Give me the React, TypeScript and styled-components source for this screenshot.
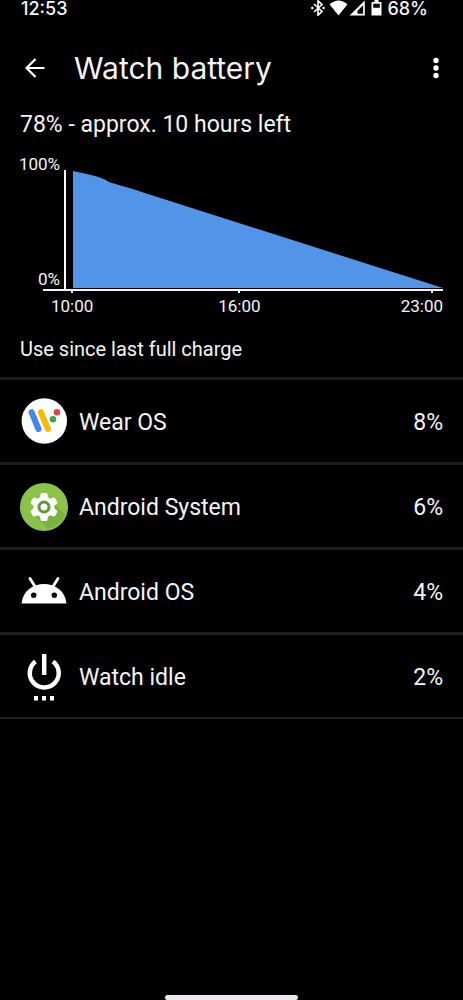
import React from "react";
import styled, { createGlobalStyle } from "styled-components";

const GlobalStyle = createGlobalStyle`
  *, *::before, *::after { box-sizing: border-box; }
  body { margin: 0; background: #000; }
`;

const Screen = styled.div`
  display: flex;
  flex-direction: column;
  min-height: 100vh;
  background: #000;
  color: #f4f4f4;
  font-family: Roboto, sans-serif;
`;

const StatusBar = styled.div`
  display: flex;
  justify-content: space-between;
  align-items: center;
  height: 18px;
  padding: 0 35px 0 21px;
  font-family: Inter, sans-serif;
  font-weight: 500;
  font-size: 18px;
  line-height: 18px;
`;

const StatusIcons = styled.div`
  display: flex;
  align-items: center;
  gap: 4px;

  svg {
    margin-bottom: 2px;
  }
`;

const TopBar = styled.header`
  display: flex;
  align-items: center;
  height: 72px;
  margin-top: 14px;
  padding: 0 12px 0 20px;
`;

const IconButton = styled.button`
  display: flex;
  align-items: center;
  justify-content: center;
  width: 30px;
  height: 40px;
  padding: 0;
  border: 0;
  background: none;
  color: inherit;
`;

const Title = styled.h1`
  flex: 1;
  margin: 0 0 0 24px;
  font-family: Inter, sans-serif;
  font-weight: 400;
  font-size: 30px;
  line-height: 40px;
`;

const Summary = styled.p`
  margin: 6px 20px 0;
  font-size: 23px;
  line-height: 30px;
`;

const Chart = styled.figure`
  display: grid;
  grid-template-columns: 40px 1fr;
  column-gap: 4px;
  margin: 14px 20px 0;
  font-size: 17px;
  line-height: 20px;
`;

const LevelLabels = styled.div`
  display: flex;
  flex-direction: column;
  justify-content: space-between;
  align-items: flex-end;
`;

const Plot = styled.div`
  height: 119px;
  margin-top: 16px;
  padding: 0 0 1px 7px;
  border-left: 2px solid #fff;
`;

const Area = styled.svg`
  display: block;
  width: 100%;
  height: 100%;
`;

const Axis = styled.svg`
  display: block;
  grid-column: 1 / -1;
  justify-self: end;
  width: calc(100% - 23px);
  height: 4px;
`;

const HourLabels = styled.div`
  grid-column: 1 / -1;
  display: grid;
  grid-template-columns: 11fr 12fr auto;
  margin: 3px 0 0 31px;
`;

const SectionTitle = styled.h2`
  margin: 21px 20px 0;
  font-weight: 400;
  font-size: 20px;
  line-height: 24px;
`;

const UsageList = styled.ul`
  margin: 16px 0 0;
  padding: 0;
  list-style: none;
  border-bottom: 2px solid #1c1c1c;
`;

const UsageRow = styled.li`
  display: flex;
  align-items: center;
  height: 85px;
  padding: 2px 20px 0;
  border-top: 3px solid #1c1c1c;
  font-size: 23px;
  line-height: 29px;
`;

const AppIcon = styled.svg`
  flex: none;
  width: 48px;
  height: 48px;
  margin-right: 11px;
`;

const AppName = styled.span`
  flex: 1;
`;

const HomeHandle = styled.div`
  width: 133px;
  height: 5px;
  margin: auto auto 0;
  border-radius: 3px;
  background: #eee8ec;
`;

const WearIcon = () => (
  <AppIcon viewBox="0 0 48 48" aria-hidden="true">
    <circle cx="24.300" cy="23" r="22.700" fill="#fff" />
    <g strokeWidth="6" strokeLinecap="round">
      <path d="M11.600 14.200 18.500 31" stroke="#4285f4" />
      <path d="M20.800 14.200 28 31" stroke="#f9bb06" />
    </g>
    <circle cx="33" cy="21.300" r="3.300" fill="#34a853" />
    <circle cx="37" cy="14.300" r="3.200" fill="#e0443a" />
  </AppIcon>
);

const SystemIcon = () => (
  <AppIcon viewBox="0 0 48 48" aria-hidden="true">
    <circle cx="24" cy="24" r="24" fill="#8bc34a" />
    <path d="M16 34 28 46q12-3 17-14L34 20Z" fill="#7bb342" />
    <g fill="#fff">
      <circle cx="24" cy="24" r="10.500" />
      {[0, 60, 120, 180, 240, 300].map((angle) => (
        <path
          key={angle}
          d="M20.600 11q.2-1 1.200-1h4.400q1 0 1.200 1l1 6h-8.800Z"
          transform={`rotate(${angle} 24 24)`}
        />
      ))}
    </g>
    <circle cx="24" cy="24" r="5" fill="#fff" stroke="#5e9a38" strokeWidth="3" />
  </AppIcon>
);

const RobotIcon = () => (
  <AppIcon viewBox="0 0 48 48" aria-hidden="true">
    <path d="M1.500 35.500C4 9.500 44 9.500 46.500 35.500Z" fill="#fff" />
    <path d="m10 10.500 5 8M38 10.500l-5 8" stroke="#fff" strokeWidth="2.800" strokeLinecap="round" />
    <circle cx="13.700" cy="27.200" r="2.700" />
    <circle cx="34.300" cy="27.200" r="2.700" />
  </AppIcon>
);

const IdleIcon = () => (
  <AppIcon viewBox="0 0 48 48" aria-hidden="true">
    <path
      d="M15.500 8.500A14.500 14.500 0 1 0 33 8.500M24.200 1v21"
      fill="none"
      stroke="#fff"
      strokeWidth="4.500"
    />
    <path d="M14 43h4v4.500h-4zM22 43h4v4.500h-4zM30 43h4v4.500h-4z" fill="#fff" />
  </AppIcon>
);

const usage = [
  { name: "Wear OS", share: "8%", Icon: WearIcon },
  { name: "Android System", share: "6%", Icon: SystemIcon },
  { name: "Android OS", share: "4%", Icon: RobotIcon },
  { name: "Watch idle", share: "2%", Icon: IdleIcon },
];

export default function App() {
  return (
    <Screen>
      <GlobalStyle />
      <StatusBar>
        <span>12:53</span>
        <StatusIcons>
          <svg width="14" height="16" viewBox="0 0 14 16" aria-hidden="true">
            <path d="M3 4l8 7.500L7 15.200V.8l4 3.700L3 12" fill="none" stroke="#fff" strokeWidth="1.600" />
            <circle cx="1.300" cy="8" r="1.200" fill="#fff" />
            <circle cx="12.600" cy="8" r="1.200" fill="#fff" />
          </svg>
          <svg width="38" height="16" viewBox="0 0 38 16" aria-hidden="true">
            <path d="M.5 4.300Q9.500-3.300 18.500 4.300L9.500 15.500Z" fill="#fff" />
            <path d="M20.500 15.500 35.800.5v15ZM28.500 13.800h5.600V5.200l-5.600 5.500Z" fill="#fff" fillRule="evenodd" />
          </svg>
          <svg width="12" height="16" viewBox="0 0 12 16" aria-hidden="true">
            <path d="M3.500 0h4v2h3v13.500h-10V2h3ZM2.200 3.700v4h6.600v-4Z" fill="#fff" fillRule="evenodd" />
          </svg>
          <span>68%</span>
        </StatusIcons>
      </StatusBar>

      <TopBar>
        <IconButton aria-label="Back">
          <svg width="20" height="20" viewBox="0 0 20 20" aria-hidden="true">
            <path d="M19.500 10H2M10.500 1 1.500 10l9 9" fill="none" stroke="#fff" strokeWidth="2.200" />
          </svg>
        </IconButton>
        <Title>Watch battery</Title>
        <IconButton aria-label="More options">
          <svg width="6" height="22" viewBox="0 0 6 22" aria-hidden="true" fill="#fff">
            <circle cx="3" cy="3.500" r="2.700" />
            <circle cx="3" cy="11" r="2.700" />
            <circle cx="3" cy="18.500" r="2.700" />
          </svg>
        </IconButton>
      </TopBar>

      <main>
        <Summary>78% - approx. 10 hours left</Summary>
        <Chart aria-label="Battery level over time">
          <LevelLabels>
            <span>100%</span>
            <span>0%</span>
          </LevelLabels>
          <Plot>
            <Area viewBox="0 0 371 118" preserveAspectRatio="none" aria-hidden="true">
              <path d="M0 1 14 4 24 6.500 32 9.500 36 12 46 15 60 19 72 23 371 118H0Z" fill="#5294e8" />
            </Area>
          </Plot>
          <Axis viewBox="0 0 400 4" preserveAspectRatio="none" aria-hidden="true">
            <path d="M0 0h400v2H0zM28 2h2v2h-2zM195 2h2v2h-2zM388 2h2v2h-2z" fill="#f4f4f8" />
          </Axis>
          <HourLabels>
            <span>10:00</span>
            <span>16:00</span>
            <span>23:00</span>
          </HourLabels>
        </Chart>
        <SectionTitle>Use since last full charge</SectionTitle>
        <UsageList>
          {usage.map(({ name, share, Icon }) => (
            <UsageRow key={name}>
              <Icon />
              <AppName>{name}</AppName>
              <span>{share}</span>
            </UsageRow>
          ))}
        </UsageList>
      </main>
      <HomeHandle />
    </Screen>
  );
}
